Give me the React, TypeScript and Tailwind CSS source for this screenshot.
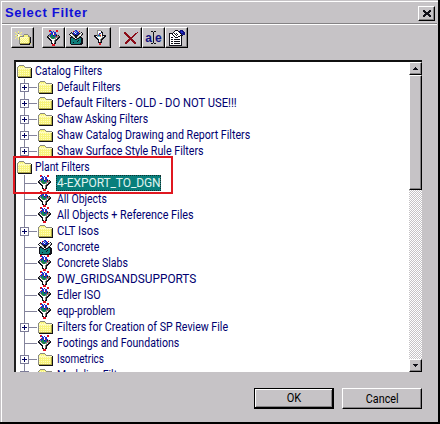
import React from "react";

const PALETTE: Record<string, string> = {
  k: "#101018", g: "#8a8a82", y: "#f8f47c", l: "#fffcc0", o: "#b0a848", w: "#ffffff",
  r: "#e01020", b: "#2030d0", n: "#101080", t: "#0f7f7c", e: "#108850", s: "#c6c3c6", c: "#70c8d8", m: "#8c0c18",
};

function Pixels({ rows, className = "" }: { rows: string[]; className?: string }) {
  const w = rows[0].length;
  return (
    <svg width={w} height={rows.length} viewBox={`0 0 ${w} ${rows.length}`} shapeRendering="crispEdges" className={`shrink-0 ${className}`}>
      {rows.flatMap((row, y) =>
        [...row].map((p, x) => (p in PALETTE ? <rect key={`${x}-${y}`} x={x} y={y} width="1" height="1" fill={PALETTE[p]} /> : null)),
      )}
    </svg>
  );
}

const FOLDER = [
  "..ggggg........",
  ".gyyyyyg.......",
  "gylylylygggggg.",
  "glllllllllllllk",
  "glylylylylylyok",
  "gyyyyyyyyyyyyok",
  "glylylylylylyok",
  "gyyyyyyyyyyyyok",
  "glylylylylylyok",
  "gyyyyyyyyyyyyok",
  "glylylylylylyok",
  "goooooooooooook",
  ".kkkkkkkkkkkkkk",
];

const FUNNEL = [
  "..rr.....rr..",
  "..rbb.b..rr..",
  "....bb.bb....",
  "...rbbwbb....",
  "..bbebwrbb...",
  ".kgbeenbekgk.",
  "kggeeebebrggk",
  "kkwgeeeegggkk",
  ".kkwgeeggwkk.",
  "..kkwwwwgkk..",
  "...kkwwgkk...",
  "....kwwgk....",
  "....kwwgk....",
  "....kkwkk....",
  ".....rrr.....",
  ".....rrr.....",
];

const CONCRETE = [
  "......bb.......",
  "....rbcbb.r....",
  "..k.bwbcbn..k..",
  ".kgkbbwbnbkgwk.",
  "kwwgkbnbbkgwgk.",
  ".kwwgkkkkgwwk..",
  "..kgwgkkgwgk...",
  ".kkkgwkkwgkkk..",
  ".kttkkwgkkttkk.",
  ".kttttkkttttkk.",
  ".ktttttttkttkk.",
  ".kttttttktttkk.",
  ".kttktttttttkk.",
  ".ktttttttttkkk.",
  "..kkkkkkkkkkk..",
];

const PAGE_FUNNEL = [
  "....gggg......",
  "....gwwwk.....",
  "....gwwwkk....",
  "....gwbbwk....",
  "....gcrywk....",
  ".kkkgberwkkkk.",
  ".kkwgccgwgwkk.",
  "..kkwwwwwgkk..",
  "...kkwwwgkk...",
  "....kkwgkk....",
  ".....kwgk.....",
  ".....kwgk.....",
  ".....kkkk.....",
  "......rr......",
  "......rr......",
];

const NEW_FOLDER = [
  "...y............",
  "y..y..y.........",
  ".y.g.y..........",
  "..ywy....gggg...",
  "yygwwyy.gyyyyg..",
  "..ywyggggyyyygg.",
  ".y.ygllllllllyok",
  "y..yglylylylyyok",
  "...ygylylylylyok",
  "....glylylylyyok",
  "....gylylylylyok",
  "....glylylylyyok",
  "....goooooooooko",
  ".....kkkkkkkkkk.",
];

const DELETE = [
  "mm...........m",
  "mmm........mm.",
  ".mmm......mm..",
  "..mmm....mm...",
  "...mmm..mm....",
  "....mmmmm.....",
  ".....mmm......",
  "....mmmmm.....",
  "...mmm.mmm....",
  "..mmm...mmm...",
  ".mmm.....mmm..",
  ".mm.......mm..",
];

const PROPERTIES = [
  "......kkk..nnn..",
  ".....kwwwknnbnn.",
  "....kwwwwwknbbnn",
  "kkkkwkwkwwwknnnn",
  "kwwkwwkwkwwwkbnn",
  "kwwwkwwkwwwkkk..",
  "kwwwwkwwwkkwk...",
  "kwkkwwkkkwwwk...",
  "kwwwwwwwwwwwk...",
  "kwkkwkkkkkkwk...",
  "kwwwwwwwwwwwk...",
  "kwkkwkkkkkkwk...",
  "kwwwwwwwwwwwk...",
  "kwkkwkkkkkkwk...",
  "kwwwwwwwwwwwk...",
  "kkkkkkkkkkkkk...",
];

const CLOSE = ["kk....kk", "kkk..kkk", ".kkkkkk.", "..kkkk..", ".kkkkkk.", "kkk..kkk", "kk....kk"];
const IBEAM = ["kk.kk", "..k..", "..k..", "..k..", "..k..", "..k..", "..k..", "..k..", "..k..", "..k..", "..k..", "..k..", "kk.kk"];
const UP = ["..k..", ".kkk.", "kkkkk"];
const DOWN = ["kkkkk", ".kkk.", "..k.."];

const RAISED = "border border-t-white border-l-white border-r-black border-b-black shadow-[inset_-1px_-1px_0_#848284]";

function ToolButton({ label, children }: { label: string; children: React.ReactNode }) {
  return (
    <button aria-label={label} className={`flex h-[21px] w-[23px] items-center justify-center bg-[#c6c3c6] ${RAISED}`}>
      {children}
    </button>
  );
}

type Kind = "root" | "folder" | "funnel" | "concrete";
type Row = { kind: Kind; text: string; fit: string; selected?: boolean; last?: boolean };

const ROWS: Row[] = [
  { kind: "root", text: "Catalog Filters", fit: "scale-x-[0.87]" },
  { kind: "folder", text: "Default Filters", fit: "scale-x-[0.855]" },
  { kind: "folder", text: "Default Filters - OLD - DO NOT USE!!!", fit: "scale-x-[0.935]" },
  { kind: "folder", text: "Shaw Asking Filters", fit: "scale-x-[0.87]" },
  { kind: "folder", text: "Shaw Catalog Drawing and Report Filters", fit: "scale-x-[0.888]" },
  { kind: "folder", text: "Shaw Surface Style Rule Filters", fit: "scale-x-[0.89]", last: true },
  { kind: "root", text: "Plant Filters", fit: "scale-x-[0.86]" },
  { kind: "funnel", text: "4-EXPORT_TO_DGN", fit: "", selected: true },
  { kind: "funnel", text: "All Objects", fit: "scale-x-[0.87]" },
  { kind: "funnel", text: "All Objects + Reference Files", fit: "scale-x-[0.9]" },
  { kind: "folder", text: "CLT Isos", fit: "scale-x-[0.93]" },
  { kind: "concrete", text: "Concrete", fit: "scale-x-[0.88]" },
  { kind: "funnel", text: "Concrete Slabs", fit: "scale-x-[0.88]" },
  { kind: "funnel", text: "DW_GRIDSANDSUPPORTS", fit: "scale-x-[0.985]" },
  { kind: "funnel", text: "Edler ISO", fit: "scale-x-[0.9]" },
  { kind: "funnel", text: "eqp-problem", fit: "scale-x-[0.865]" },
  { kind: "folder", text: "Filters for Creation of SP Review File", fit: "scale-x-[0.885]" },
  { kind: "funnel", text: "Footings and Foundations", fit: "scale-x-[0.88]" },
  { kind: "folder", text: "Isometrics", fit: "scale-x-[0.83]" },
  { kind: "folder", text: "Modeling Filters", fit: "scale-x-[0.87]" },
];

function Branch({ expandable, last }: { expandable: boolean; last?: boolean }) {
  return (
    <div className="relative h-4 w-[21px] shrink-0">
      <div className={`absolute left-[8px] top-0 w-px bg-[#84849c] ${last ? "h-2" : "h-4"}`} />
      <div className="absolute left-[8px] top-[8px] h-px w-[13px] bg-[#84849c]" />
      {expandable && (
        <div className="absolute left-[4px] top-[4px] h-[9px] w-[9px] border border-[#7c7c98] bg-white">
          <div className="absolute left-px top-[3px] h-px w-[5px] bg-[#000060]" />
          <div className="absolute left-[3px] top-px h-[5px] w-px bg-[#000060]" />
        </div>
      )}
    </div>
  );
}

function TreeRow({ row }: { row: Row }) {
  const icon = row.kind === "funnel" ? FUNNEL : row.kind === "concrete" ? CONCRETE : FOLDER;
  return (
    <div className="flex h-4 shrink-0 items-center">
      {row.kind !== "root" && <Branch expandable={row.kind === "folder"} last={row.last} />}
      <div className={`flex h-4 shrink-0 items-center pl-px ${row.kind === "root" ? "w-[19px]" : "w-5"}`}>
        <Pixels rows={icon} />
      </div>
      <span
        className={`h-4 origin-left whitespace-pre leading-[17px] ${row.fit} ${
          row.selected ? "-ml-px bg-[#087f7b] pl-px tracking-[-0.1px] text-[#e0f4f0] outline-1 -outline-offset-1 outline-dotted outline-[#103030]" : ""
        }`}
      >
        {row.text}
      </span>
    </div>
  );
}

export default function App() {
  return (
    <div className="relative flex h-[424px] w-[440px] flex-col overflow-hidden border-r-2 border-b-2 border-black bg-[#c6c3c6] pt-px pl-px font-['Roboto','Liberation_Sans',sans-serif] text-[12px] text-[#000070]">
      <div className="flex min-h-0 flex-1 flex-col border-t border-l border-white">
        <header className="mr-px flex h-[22px] shrink-0 items-center justify-between border-b border-[#848284] pl-[3px] pr-[2px]">
          <h1 className="font-['Liberation_Sans',sans-serif] text-[13px] font-bold tracking-[0.7px] text-[#1010d8]">Select Filter</h1>
          <button aria-label="Close" className={`mt-[2px] flex h-[15px] w-[17px] items-center justify-center ${RAISED}`}>
            <Pixels rows={CLOSE} />
          </button>
        </header>
        <div className="mr-px h-px shrink-0 bg-white" />
        <nav className="mt-[2px] flex h-[21px] shrink-0 pl-[9px]">
          <ToolButton label="New folder"><Pixels rows={NEW_FOLDER} /></ToolButton>
          <div className="ml-2 flex">
            <ToolButton label="New filter"><Pixels rows={FUNNEL} /></ToolButton>
            <ToolButton label="New compound filter"><Pixels rows={CONCRETE} /></ToolButton>
            <ToolButton label="New report filter"><Pixels rows={PAGE_FUNNEL} /></ToolButton>
          </div>
          <div className="ml-2 flex">
            <ToolButton label="Delete"><Pixels rows={DELETE} /></ToolButton>
            <ToolButton label="Rename">
              <span className="flex items-center font-['Liberation_Sans',sans-serif] text-[12px] leading-none font-bold text-[#101080]">
                a<Pixels rows={IBEAM} className="-mx-px" />e
              </span>
            </ToolButton>
            <ToolButton label="Properties"><Pixels rows={PROPERTIES} /></ToolButton>
          </div>
        </nav>
        <main className="mt-3 ml-[12px] flex h-[312px] w-[408px] shrink-0 border-t-2 border-l-2 border-t-[#101010] border-l-[#202020] bg-white">
          <div className="flex min-w-0 flex-1 flex-col overflow-hidden pt-px">
            {ROWS.map((row) => <TreeRow key={row.text} row={row} />)}
          </div>
          <div className="flex w-[13px] shrink-0 flex-col bg-[repeating-conic-gradient(#ffffff_0%_25%,#c6c3c6_0%_50%)] bg-size-[2px_2px]">
            <button aria-label="Scroll up" className={`flex h-[13px] shrink-0 items-center justify-center bg-[#c6c3c6] ${RAISED}`}><Pixels rows={UP} /></button>
            <div className={`h-[115px] shrink-0 bg-[#c6c3c6] ${RAISED}`} />
            <div className="flex-1" />
            <button aria-label="Scroll down" className={`flex h-[13px] shrink-0 items-center justify-center bg-[#c6c3c6] ${RAISED}`}><Pixels rows={DOWN} /></button>
          </div>
        </main>
        <footer className="mt-4 flex justify-end gap-2 pr-[16px] text-[12px] text-black">
          <button className="flex h-[21px] w-20 items-center justify-center border border-r-2 border-b-2 border-black shadow-[inset_1px_1px_0_#fff,inset_-1px_-1px_0_#848284]">
            <span className="scale-x-[0.92]">OK</span>
          </button>
          <button className={`flex h-[21px] w-20 items-center justify-center ${RAISED}`}>
            <span className="scale-x-[0.9]">Cancel</span>
          </button>
        </footer>
      </div>
      <div className="pointer-events-none absolute left-[13px] top-[156px] h-[38px] w-[160px] border-2 border-[#e01820]" />
    </div>
  );
}
